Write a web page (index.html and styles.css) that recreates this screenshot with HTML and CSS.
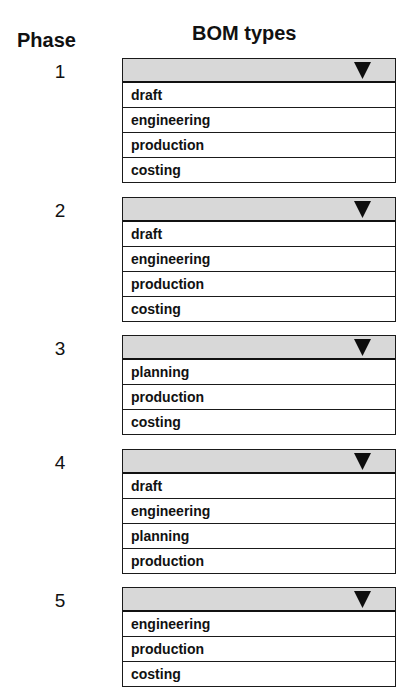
FILE: index.html
```html
<!DOCTYPE html>
<html lang="en">
<head>
<meta charset="utf-8">
<title>BOM types by phase</title>
<link rel="stylesheet" href="styles.css">
</head>
<body>
<div class="page">
  <div class="head">
    <div class="phase-title">Phase</div>
    <div class="bom-title">BOM types</div>
  </div>
  <div class="sections">
    <section class="phase">
      <div class="num">1</div>
      <div class="dropdown">
        <div class="dd-head"><svg class="caret" viewBox="0 0 17 17" width="17" height="17"><polygon points="0,0 17,0 8.5,17"/></svg></div>
        <div class="opt">draft</div>
        <div class="opt">engineering</div>
        <div class="opt">production</div>
        <div class="opt">costing</div>
      </div>
    </section>
    <section class="phase">
      <div class="num">2</div>
      <div class="dropdown">
        <div class="dd-head"><svg class="caret" viewBox="0 0 17 17" width="17" height="17"><polygon points="0,0 17,0 8.5,17"/></svg></div>
        <div class="opt">draft</div>
        <div class="opt">engineering</div>
        <div class="opt">production</div>
        <div class="opt">costing</div>
      </div>
    </section>
    <section class="phase">
      <div class="num">3</div>
      <div class="dropdown">
        <div class="dd-head"><svg class="caret" viewBox="0 0 17 17" width="17" height="17"><polygon points="0,0 17,0 8.5,17"/></svg></div>
        <div class="opt">planning</div>
        <div class="opt">production</div>
        <div class="opt">costing</div>
      </div>
    </section>
    <section class="phase">
      <div class="num">4</div>
      <div class="dropdown">
        <div class="dd-head"><svg class="caret" viewBox="0 0 17 17" width="17" height="17"><polygon points="0,0 17,0 8.5,17"/></svg></div>
        <div class="opt">draft</div>
        <div class="opt">engineering</div>
        <div class="opt">planning</div>
        <div class="opt">production</div>
      </div>
    </section>
    <section class="phase">
      <div class="num">5</div>
      <div class="dropdown">
        <div class="dd-head"><svg class="caret" viewBox="0 0 17 17" width="17" height="17"><polygon points="0,0 17,0 8.5,17"/></svg></div>
        <div class="opt">engineering</div>
        <div class="opt">production</div>
        <div class="opt">costing</div>
      </div>
    </section>
  </div>
</div>
</body>
</html>
```
FILE: styles.css
```css
html, body {
  margin: 0;
  padding: 0;
  background: #ffffff;
}

body {
  font-family: "Liberation Sans", Arial, sans-serif;
  color: #111111;
}

.page {
  padding: 21px 0 0 17px;
}

.head {
  display: flex;
  align-items: flex-start;
  margin-bottom: 6px;
}

.phase-title {
  width: 105px;
  margin-top: 7px;
  font-size: 20px;
  line-height: 24px;
  font-weight: bold;
}

.bom-title {
  padding-left: 70px;
  font-size: 20px;
  line-height: 24px;
  font-weight: bold;
}

.sections {
  display: flex;
  flex-direction: column;
  gap: 13.5px;
}

.phase {
  display: flex;
  align-items: flex-start;
}

.num {
  width: 86px;
  margin-right: 19px;
  padding-top: 1px;
  text-align: center;
  font-size: 19px;
  line-height: 25px;
}

.dropdown {
  width: 272px;
  border: 1px solid #1a1a1a;
}

.dd-head {
  height: 22px;
  background: #d8d8d8;
  border-bottom: 2px solid #111111;
  display: flex;
  justify-content: flex-end;
  align-items: flex-start;
  padding-right: 24px;
}

.caret {
  display: block;
  margin-top: 3px;
  fill: #0d0d0d;
}

.opt {
  height: 24px;
  line-height: 24px;
  padding-left: 8px;
  font-size: 14px;
  font-weight: bold;
  border-top: 1px solid #1a1a1a;
}

.dd-head + .opt {
  border-top: none;
}

.opt:last-child {
  height: 24px;
}
```
